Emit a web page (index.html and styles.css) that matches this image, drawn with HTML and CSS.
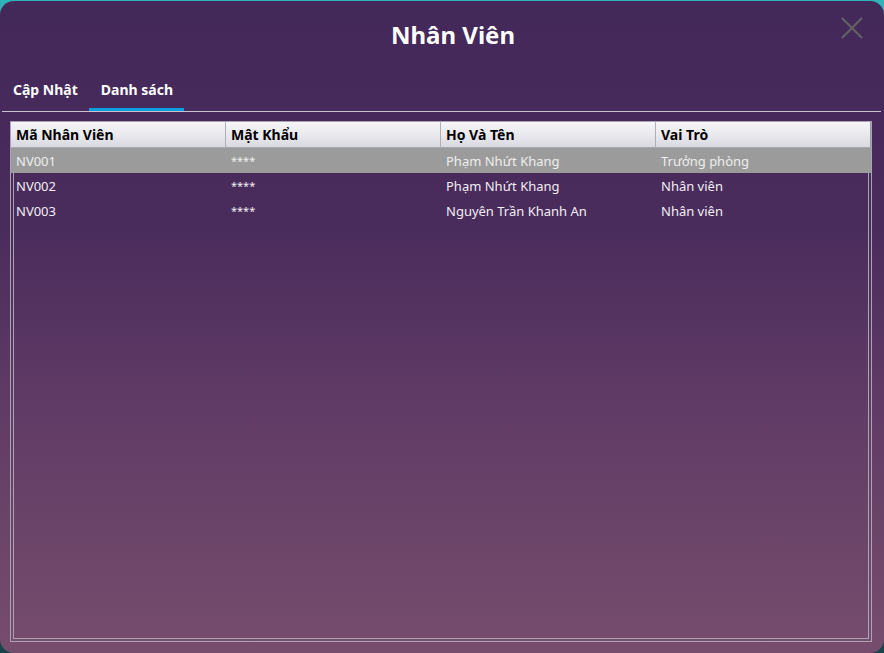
FILE: index.html
```html
<!DOCTYPE html>
<html lang="vi">
<head>
<meta charset="utf-8">
<title>Nhân Viên</title>
<link rel="stylesheet" href="styles.css">
</head>
<body>
<div class="window">
  <div class="titlebar">
    <h1 class="title">Nhân Viên</h1>
    <button class="close" aria-label="Đóng">
      <svg width="24" height="24" viewBox="0 0 24 24"><path d="M2 2 L22 22 M22 2 L2 22" stroke="#626262" stroke-width="2.2" fill="none"/></svg>
    </button>
  </div>
  <div class="tabs">
    <div class="tab">Cập Nhật</div>
    <div class="tab active">Danh sách</div>
  </div>
  <div class="content">
    <div class="table">
      <div class="inner-frame"></div>
      <div class="row head">
        <div class="cell">Mã Nhân Viên</div>
        <div class="cell">Mật Khẩu</div>
        <div class="cell">Họ Và Tên</div>
        <div class="cell">Vai Trò</div>
      </div>
      <div class="row selected">
        <div class="cell">NV001</div>
        <div class="cell pw">****</div>
        <div class="cell">Phạm Nhứt Khang</div>
        <div class="cell">Trưởng phòng</div>
      </div>
      <div class="row">
        <div class="cell">NV002</div>
        <div class="cell pw">****</div>
        <div class="cell">Phạm Nhứt Khang</div>
        <div class="cell">Nhân viên</div>
      </div>
      <div class="row">
        <div class="cell">NV003</div>
        <div class="cell pw">****</div>
        <div class="cell">Nguyên Trần Khanh An</div>
        <div class="cell">Nhân viên</div>
      </div>
    </div>
  </div>
</div>
</body>
</html>
```

FILE: styles.css
```css
html, body {
  margin: 0;
  padding: 0;
}
body {
  width: 884px;
  height: 653px;
  overflow: hidden;
  background: linear-gradient(180deg, #2fb4b8 0%, #1d6f73 40%, #17454a 100%);
  font-family: "Noto Sans", "Open Sans", sans-serif;
}
.window {
  margin-top: 1px;
  height: 652px;
  border-radius: 14px;
  background: linear-gradient(180deg, #43285a 0%, #4a2c5c 35%, #5f3a65 60%, #764d6d 100%);
  display: flex;
  flex-direction: column;
  overflow: hidden;
}
.titlebar {
  position: relative;
  height: 69px;
  display: flex;
  justify-content: center;
  align-items: flex-start;
  padding-left: 22px;
}
.title {
  margin: 18px 0 0 0;
  font-size: 24px;
  font-weight: 700;
  color: #ffffff;
  line-height: 32px;
}
.close {
  position: absolute;
  top: 15px;
  right: 20px;
  width: 24px;
  height: 24px;
  padding: 0;
  border: 0;
  background: none;
}
.close svg {
  display: block;
}
.tabs {
  display: flex;
  height: 41px;
  border-bottom: 1px solid #c9c1cd;
  margin: 0 3px 0 2px;
}
.tab {
  padding: 0 11px;
  font-size: 14px;
  font-weight: 700;
  color: #ffffff;
  line-height: 40px;
  border-bottom: 3px solid transparent;
  height: 38px;
}
.tab.active {
  padding: 0 11px 0 12px;
  border-bottom-color: #0a9fdc;
}
.content {
  flex: 1;
  display: flex;
  padding: 9px 12px 11px 10px;
}
.table {
  position: relative;
  flex: 1;
  border: 1px solid #aaa3b2;
}
.inner-frame {
  position: absolute;
  left: 2px;
  top: 2px;
  right: 2px;
  bottom: 2px;
  border: 1px solid #aaa3b2;
}
.row {
  position: relative;
  display: grid;
  grid-template-columns: 215px 215px 215px 215px;
  height: 25px;
  font-size: 13px;
  color: #f2eef4;
  align-items: center;
}
.row.head {
  height: 25px;
  font-size: 14px;
  border-bottom: 1px solid #a9a9b1;
  background: linear-gradient(180deg, #f6f6f9 0%, #e9e9ee 50%, #d9d9e1 100%);
  color: #000000;
  font-weight: 700;
}
.row.head .cell {
  border-right: 1px solid #aeaeb6;
  height: 25px;
  line-height: 25px;
  padding-top: 0;
}
.row.head .cell:last-child {
  border-right: 1px solid #9a9aa2;
}
.row.selected {
  background: #9b9b9b;
  color: #eeeeee;
}
.cell {
  padding-left: 5px;
  padding-top: 1px;
  white-space: nowrap;
  overflow: hidden;
  line-height: 24px;
}
.cell.pw {
  font-size: 11px;
}
```
